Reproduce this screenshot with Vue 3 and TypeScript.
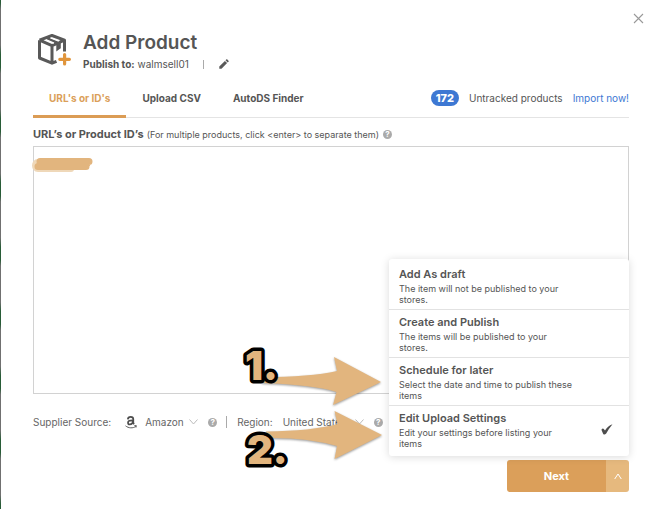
<script setup lang="ts">
import { ref } from 'vue'

interface Option {
  title: string
  text: string
}

const tabs: string[] = ["URL's or ID's", 'Upload CSV', 'AutoDS Finder']
const activeTab = ref(0)
const urls = ref('')
const supplier = ref('Amazon')
const region = ref('United States')

const options: Option[] = [
  { title: 'Add As draft', text: 'The item will not be published to your stores.' },
  { title: 'Create and Publish', text: 'The items will be published to your stores.' },
  { title: 'Schedule for later', text: 'Select the date and time to publish these items' },
  { title: 'Edit Upload Settings', text: 'Edit your settings before listing your items' },
]
const selected = ref(3)
const menuOpen = ref(true)
</script>

<template>
  <main class="dialog">
    <button class="close" type="button" aria-label="Close">
      <svg width="11" height="11" viewBox="0 0 11 11"><path d="M1 1l9 9M10 1l-9 9" fill="none" stroke="#999" stroke-width="1.1" /></svg>
    </button>

    <header class="head">
      <svg class="box-icon" width="34" height="34" viewBox="0 0 34 34">
        <path d="M3.500 7.200L16 2.500 28.500 7.200V18.500M3.500 7.200V25L16 30.200 20.500 28.300M3.500 7.200L16 12.700 28.500 7.200M16 12.700V30" fill="none" stroke="#595959" stroke-width="3" stroke-linejoin="round" />
        <path d="M8 5.500L20.300 11.200V18.500l3-2.300 1.500-1V9L11 4z" fill="#595959" />
        <path d="M9.800 6.700l8.200 3.500M14.600 4.900l8.200 3.200" stroke="#fff" stroke-width="1.300" />
        <path d="M28.600 21.500v9.500M23.800 26.300h9.600" stroke="#e0953c" stroke-width="3.200" stroke-linecap="round" />
      </svg>
      <div>
        <h1>Add Product</h1>
        <p class="publish">
          <span><b>Publish to:</b> walmsell01</span>
          <i class="bar"></i>
          <button class="edit" type="button" aria-label="Edit store">
            <svg width="10" height="10" viewBox="0 0 10 10"><path d="M.3 9.700V7.500L5.900 1.900 8.100 4.100 2.500 9.700zM6.500 1.300L7.500.3q.3-.3.600 0L9.700 1.900q.3.300 0 .6L8.700 3.500z" fill="#595959" /></svg>
          </button>
        </p>
      </div>
    </header>

    <nav class="tabs">
      <button v-for="(tab, i) in tabs" :key="tab" type="button" class="tab" :class="{ active: i === activeTab }" @click="activeTab = i">{{ tab }}</button>
      <div class="untracked">
        <span class="count">172</span>
        <span>Untracked products</span>
        <a href="#import">Import now!</a>
      </div>
    </nav>

    <div class="field-label">
      <label for="urls"><b>URL’s or Product ID’s</b> <small>(For multiple products, click &lt;enter&gt; to separate them)</small></label>
      <span class="help">?</span>
    </div>
    <div class="entry">
      <textarea id="urls" v-model="urls"></textarea>
      <svg class="scribble" width="64" height="18" viewBox="0 0 64 18" aria-hidden="true">
        <path d="M6 6C2 6 2 13 6 13H39" fill="none" stroke="#efd8b9" stroke-width="6" stroke-linecap="round" />
        <path d="M8 5.500H57M6 10.500H54M11 7.500H55" fill="none" stroke="#e2b57e" stroke-width="7" stroke-linecap="round" />
      </svg>
    </div>

    <div class="source">
      <label for="supplier">Supplier Source:</label>
      <svg class="amazon" width="12" height="13" viewBox="0 0 12 13">
        <path d="M2.800 3.300C3 1.500 4.200.9 5.700.9c1.700 0 2.600.8 2.600 2.400v3.200c0 .9.300 1.200.8 1.800M8 4.300C4.700 4.200 3 4.900 3 6.700c0 1.100.7 1.700 1.700 1.700C6.700 8.400 8 7 8 4.300" fill="none" stroke="#4d4d4d" stroke-width="1.700" />
        <path d="M.5 9.800c3.100 2.600 7.500 2.600 10.400.6M9.300 9.700l2-.1-.3 1.900" fill="none" stroke="#4d4d4d" stroke-width=".9" />
      </svg>
      <span class="pick">
        <select id="supplier" v-model="supplier" class="supplier"><option>Amazon</option></select>
        <svg width="9" height="6" viewBox="0 0 9 6"><path d="M.5.5l4 4.500 4-4.500" fill="none" stroke="#bbb" /></svg>
      </span>
      <span class="help">?</span>
      <i class="divider"></i>
      <label for="region">Region:</label>
      <span class="pick">
        <select id="region" v-model="region" class="region"><option>United States</option></select>
        <svg width="9" height="6" viewBox="0 0 9 6"><path d="M.5.5l4 4.500 4-4.500" fill="none" stroke="#bbb" /></svg>
      </span>
      <span class="help">?</span>
    </div>

    <footer class="actions">
      <div class="split">
        <button class="next" type="button">Next</button>
        <button class="toggle" type="button" aria-label="Publishing options" @click="menuOpen = !menuOpen">
          <svg width="8" height="7" viewBox="0 0 8 7"><path d="M.7 6L4 1l3.300 5" fill="none" stroke="#fff" /></svg>
        </button>
        <div v-if="menuOpen" class="menu">
          <button v-for="(option, i) in options" :key="option.title" type="button" class="option" @click="selected = i">
            <span class="copy">
              <strong>{{ option.title }}</strong>
              <span>{{ option.text }}</span>
            </span>
            <svg v-if="i === selected" width="12" height="11" viewBox="0 0 12 11"><path d="M.4 5.700Q1.700 3.900 2.800 4.900L4 6.600Q6.500 2 11.500.2 7.800 4.600 5.200 9.500 3.300 11.600 2.100 9.700z" fill="#4d4d4d" /></svg>
          </button>
        </div>
      </div>
    </footer>

    <svg class="notes" width="150" height="150" viewBox="240 340 150 150">
      <g class="arrow">
        <path d="M262 377Q310 377 337 371L334 357 381 382 333 405 336.500 392Q315 385 262 383z" />
        <path d="M266 431.500Q312 431 337.500 424L334.500 411 382 435 334.500 459 337 446Q305 437 266 438z" />
      </g>
      <text x="245" y="380">1.</text>
      <text x="247" y="464">2.</text>
    </svg>
  </main>
</template>

<style>
body {
  background: #fff;
}
</style>

<style scoped>
.dialog {
  position: relative;
  min-height: 100vh;
  box-sizing: border-box;
  padding: 30px 27px 17px 32px;
  border-left: 1px solid;
  border-image: repeating-linear-gradient(#285c37 0 4px, #707070 10px 46px, #285c37 55px 64px) 1;
  color: #555;
  font: 11px/16px Inter, "Liberation Sans", sans-serif;
}
button {
  padding: 0;
  border: 0;
  background: none;
  color: inherit;
  font: inherit;
  cursor: pointer;
}
svg {
  display: block;
  flex: none;
}
.close {
  position: absolute;
  top: 13px;
  right: 12px;
}
.head {
  display: flex;
  gap: 13px;
  padding-left: 3px;
}
.box-icon {
  margin-top: 3px;
  overflow: visible;
}
h1 {
  margin: 0;
  font: 600 19px/26px Inter, sans-serif;
  color: #555;
}
.publish {
  display: flex;
  align-items: center;
  margin: 0;
  font-size: 10px;
}
.publish b {
  font-weight: 700;
}
.bar {
  width: 1px;
  height: 9px;
  margin: 0 15px 0 14px;
  background: #aaa;
}
.tabs {
  display: flex;
  align-items: center;
  height: 36px;
  margin-top: 9px;
  border-bottom: 1px solid #e4e4e4;
}
.tab {
  align-self: stretch;
  padding: 0 16px;
  margin-bottom: -1px;
  border-bottom: 3px solid transparent;
  font-weight: 700;
  font-size: 10px;
}
.tab.active {
  border-color: #db9c55;
  color: #db9f5a;
}
.untracked {
  display: flex;
  align-items: center;
  gap: 10px;
  margin-left: auto;
  padding-bottom: 2px;
  font-size: 10px;
}
.count {
  padding: 0 5px;
  border-radius: 8px;
  background: #3d78d3;
  color: #fff;
  font-size: 11px;
  font-weight: 800;
}
a {
  color: #3d78d3;
  text-decoration: none;
}
.field-label {
  display: flex;
  align-items: center;
  gap: 4px;
  margin-top: 8px;
  padding-bottom: 3px;
}
.field-label b {
  font-weight: 700;
}
small {
  font-size: 9px;
}
.help {
  width: 9px;
  height: 9px;
  border-radius: 50%;
  background: #aaa;
  color: #fff;
  font-size: 8px;
  font-weight: 700;
  line-height: 9px;
  text-align: center;
}
.entry {
  position: relative;
}
textarea {
  display: block;
  box-sizing: border-box;
  width: 100%;
  height: 248px;
  padding: 8px;
  border: 1px solid #d2d2d2;
  outline: none;
  resize: none;
  font: inherit;
}
.scribble {
  position: absolute;
  top: 10px;
  left: -1px;
}
.source {
  display: flex;
  align-items: center;
  margin-top: 20px;
  color: #666;
  font-size: 10px;
}
.amazon {
  margin: 0 8px 0 14px;
}
.pick {
  display: flex;
  align-items: center;
}
select {
  appearance: none;
  padding: 0;
  border: 0;
  background: none;
  color: inherit;
  font: inherit;
}
.supplier {
  width: 44px;
}
.region {
  width: 72px;
}
.source .help {
  margin-left: 10px;
}
.divider {
  width: 1px;
  height: 12px;
  margin: 0 10px 0 9px;
  background: #aaa;
}
label[for="region"] {
  margin-right: 10px;
}
.actions {
  display: flex;
  justify-content: flex-end;
  margin-top: 30px;
}
.split {
  position: relative;
  display: flex;
  height: 32px;
}
.next {
  width: 99px;
  border-radius: 3px 0 0 3px;
  background: #db9f5a;
  color: #fff;
  font-weight: 700;
}
.toggle {
  display: grid;
  place-items: center;
  width: 23px;
  border-radius: 0 3px 3px 0;
  background: #e6b97e;
}
.menu {
  position: absolute;
  right: 0;
  bottom: 36px;
  z-index: 2;
  box-sizing: border-box;
  width: 240px;
  padding: 3px 0;
  border-radius: 3px;
  background: #fff;
  box-shadow: 0 1px 8px rgba(0, 0, 0, 0.15);
}
.option {
  display: flex;
  align-items: center;
  justify-content: space-between;
  box-sizing: border-box;
  width: 100%;
  padding: 4px 16px 4px 10px;
  border-bottom: 1px solid #e2e2e2;
  text-align: left;
}
.option:last-child {
  border-bottom: 0;
}
.copy {
  display: flex;
  flex-direction: column;
  gap: 1px;
  width: 176px;
  font-size: 9px;
  line-height: 11px;
}
.copy strong {
  font-size: 11px;
  line-height: 16px;
  font-weight: 600;
}
.notes {
  position: absolute;
  top: 340px;
  left: 239px;
  z-index: 1;
  overflow: visible;
  pointer-events: none;
}
.arrow {
  fill: #e2b57e;
  filter: drop-shadow(0 1px 1px rgba(0, 0, 0, 0.4));
}
.notes text {
  fill: #e2b57e;
  stroke: #000;
  stroke-width: 7px;
  stroke-linejoin: round;
  paint-order: stroke;
  font: 900 40px Inter, sans-serif;
}
</style>
